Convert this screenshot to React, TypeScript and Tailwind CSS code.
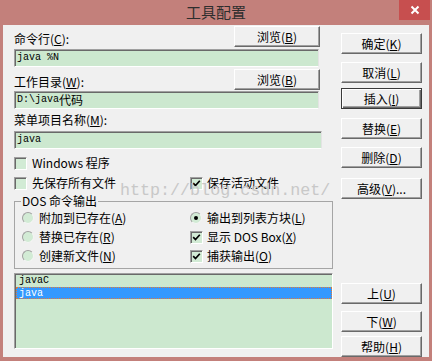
import clsx from "clsx";
import type { ReactNode } from "react";

const cjk = "font-['Noto_Sans_CJK_SC',sans-serif]";
const mono = "font-['Liberation_Mono','Noto_Sans_CJK_SC',monospace]";

// botão estilo Windows clássico
function Btn({ children, primary, className }: { children: ReactNode; primary?: boolean; className?: string }) {
    return (
        <div
            className={clsx(
                "h-[21px] flex items-center justify-center bg-[#f0f0f0] text-[12px] leading-[14px] text-black",
                primary
                    ? "border border-[#3a3a3a] shadow-[inset_1px_1px_0_#ffffff,inset_-1px_-1px_0_#696969,inset_-2px_-2px_0_#a0a0a0]"
                    : "border border-t-white border-l-white border-r-[#696969] border-b-[#696969] shadow-[inset_-1px_-1px_0_#a0a0a0]",
                className
            )}
        >
            {children}
        </div>
    );
}

function Field({ children, className }: { children?: ReactNode; className?: string }) {
    return (
        <div
            className={clsx(
                "h-[18px] flex items-center pl-[2px] bg-[#cce8cf] border border-t-[#a0a0a0] border-l-[#a0a0a0] border-b-white border-r-[#e3e3e3] shadow-[inset_1px_1px_0_#696969] text-[10px] leading-[12px] text-black",
                mono,
                className
            )}
        >
            {children}
        </div>
    );
}

function Check({ checked }: { checked?: boolean }) {
    return (
        <span className="w-[13px] h-[13px] shrink-0 flex items-center justify-center bg-[#d2ebd5] border border-t-[#a0a0a0] border-l-[#a0a0a0] border-b-white border-r-white shadow-[inset_1px_1px_0_#696969]">
            {checked && (
                <svg width="9" height="9" viewBox="0 0 9 9">
                    <path d="M1.2 4.2 L3.5 6.6 L7.8 1.8" stroke="#000" strokeWidth="1.7" fill="none" />
                </svg>
            )}
        </span>
    );
}

function Radio({ checked }: { checked?: boolean }) {
    return (
        <span className="w-[12px] h-[12px] shrink-0 rounded-full flex items-center justify-center bg-[#d2ebd5] border border-t-[#a0a0a0] border-l-[#a0a0a0] border-b-[#f4f4f4] border-r-[#f4f4f4]">
            {checked && <span className="w-[4px] h-[4px] rounded-full bg-black" />}
        </span>
    );
}

export default function App() {
    return (
        <div className={clsx("w-[432px] h-[361px] bg-[#c3807b] flex flex-col overflow-hidden", cjk)}>
            {/* --- BARRA DE TÍTULO --- */}
            <div className="relative h-[25px] shrink-0 flex items-center justify-center pb-[2px]">
                <span className="text-[15px] leading-[18px] text-[#2e2e2e]">工具配置</span>
                <div className="absolute right-[2px] top-0 w-[31px] h-[20px] bg-[#c74f4f] flex items-center justify-center">
                    <svg width="10" height="10" viewBox="0 0 10 10">
                        <path d="M1.5 1.5 L8.5 8.5 M8.5 1.5 L1.5 8.5" stroke="#fff" strokeWidth="2" />
                    </svg>
                </div>
            </div>

            {/* --- CORPO DO DIÁLOGO --- */}
            <div className="relative mx-[3px] mb-[4px] flex-1 bg-[#f0f0f0] flex text-[12px] text-black">
                <div className="ml-[11px] w-[319px] flex flex-col">
                    <div className="mt-[1px] w-[306px] h-[21px] flex items-end justify-between">
                        <span className="pb-[1px] leading-[14px]">命令行(<u>C</u>):</span>
                        <Btn className="w-[86px]">浏览(<u>B</u>)</Btn>
                    </div>
                    <Field className="mt-[2px] w-[305px]">java %N</Field>

                    <div className="mt-[2px] w-[306px] h-[21px] flex items-end justify-between">
                        <span className="pb-[1px] leading-[14px]">工作目录(<u>W</u>):</span>
                        <Btn className="w-[86px]">浏览(<u>B</u>)</Btn>
                    </div>
                    <Field className="mt-[1px] w-[305px]">
                        D:\java<span className={clsx("text-[12px]", cjk)}>代码</span>
                    </Field>

                    <div className="mt-[1px] h-[20px] flex items-center leading-[14px]">菜单项目名称(<u>M</u>):</div>
                    <Field className="mt-[1px] w-[308px]">java</Field>

                    <div className="mt-[7px] h-[14px] flex items-center gap-[5px] leading-[14px]">
                        <Check />
                        <span>Windows 程序</span>
                    </div>
                    <div className="mt-[6px] h-[14px] flex items-center leading-[14px]">
                        <div className="w-[176px] flex items-center gap-[5px]">
                            <Check />
                            <span>先保存所有文件</span>
                        </div>
                        <div className="flex items-center gap-[4px]">
                            <Check checked />
                            <span>保存活动文件</span>
                        </div>
                    </div>

                    {/* --- GRUPO DOS --- */}
                    <fieldset className="mt-[4px] w-[319px] border border-[#a5a5a5] pb-[5px]">
                        <legend className="ml-[6px] px-[1px] leading-[14px]">DOS 命令输出</legend>
                        <div className="mt-[3px] grid grid-cols-[175px_1fr] gap-y-[5px] leading-[14px]">
                            <div className="h-[14px] pl-[7px] flex items-center gap-[5px]">
                                <Radio />
                                <span>附加到已存在(<u>A</u>)</span>
                            </div>
                            <div className="h-[14px] flex items-center gap-[5px]">
                                <Radio checked />
                                <span>输出到列表方块(<u>L</u>)</span>
                            </div>
                            <div className="h-[14px] pl-[7px] flex items-center gap-[5px]">
                                <Radio />
                                <span>替换已存在(<u>R</u>)</span>
                            </div>
                            <div className="h-[14px] flex items-center gap-[4px]">
                                <Check checked />
                                <span>显示 DOS Box(<u>X</u>)</span>
                            </div>
                            <div className="h-[14px] pl-[7px] flex items-center gap-[5px]">
                                <Radio />
                                <span>创建新文件(<u>N</u>)</span>
                            </div>
                            <div className="h-[14px] flex items-center gap-[4px]">
                                <Check checked />
                                <span>捕获输出(<u>O</u>)</span>
                            </div>
                        </div>
                    </fieldset>

                    {/* --- LISTA --- */}
                    <div
                        className={clsx(
                            "mt-[4px] w-[319px] h-[76px] pt-[1px] bg-[#cce8cf] border border-t-[#a0a0a0] border-l-[#a0a0a0] border-b-white border-r-white shadow-[inset_1px_1px_0_#696969] text-[10px] leading-[12px]",
                            mono
                        )}
                    >
                        <div className="h-[12px] pl-[3px] ml-[1px]">javaC</div>
                        <div className="h-[12px] pl-[2px] ml-[1px] bg-[#3399ff] text-white border border-dotted border-[#e07a3a]">java</div>
                    </div>
                </div>

                {/* --- BOTÕES DA DIREITA --- */}
                <div className="ml-[8px] w-[81px] flex flex-col">
                    <Btn className="mt-[8px]">确定(<u>K</u>)</Btn>
                    <Btn className="mt-[8px]">取消(<u>L</u>)</Btn>
                    <Btn primary className="mt-[5px]">插入(<u>I</u>)</Btn>
                    <Btn className="mt-[9px]">替换(<u>E</u>)</Btn>
                    <Btn className="mt-[8px]">删除(<u>D</u>)</Btn>
                    <Btn className="mt-[10px]">高级(<u>V</u>)...</Btn>
                    <Btn className="mt-[84px]">上(<u>U</u>)</Btn>
                    <Btn className="mt-[7px]">下(<u>W</u>)</Btn>
                    <Btn className="mt-[4px]">帮助(<u>H</u>)</Btn>
                </div>

                {/* marca d'água */}
                <span
                    className={clsx(
                        "pointer-events-none absolute left-[117px] top-[162px] text-[16.7px] leading-[8px] text-[#c8c8c8]",
                        "font-['Liberation_Mono',monospace]"
                    )}
                >
                    http://blog.csdn.net/
                </span>
            </div>
        </div>
    );
}
